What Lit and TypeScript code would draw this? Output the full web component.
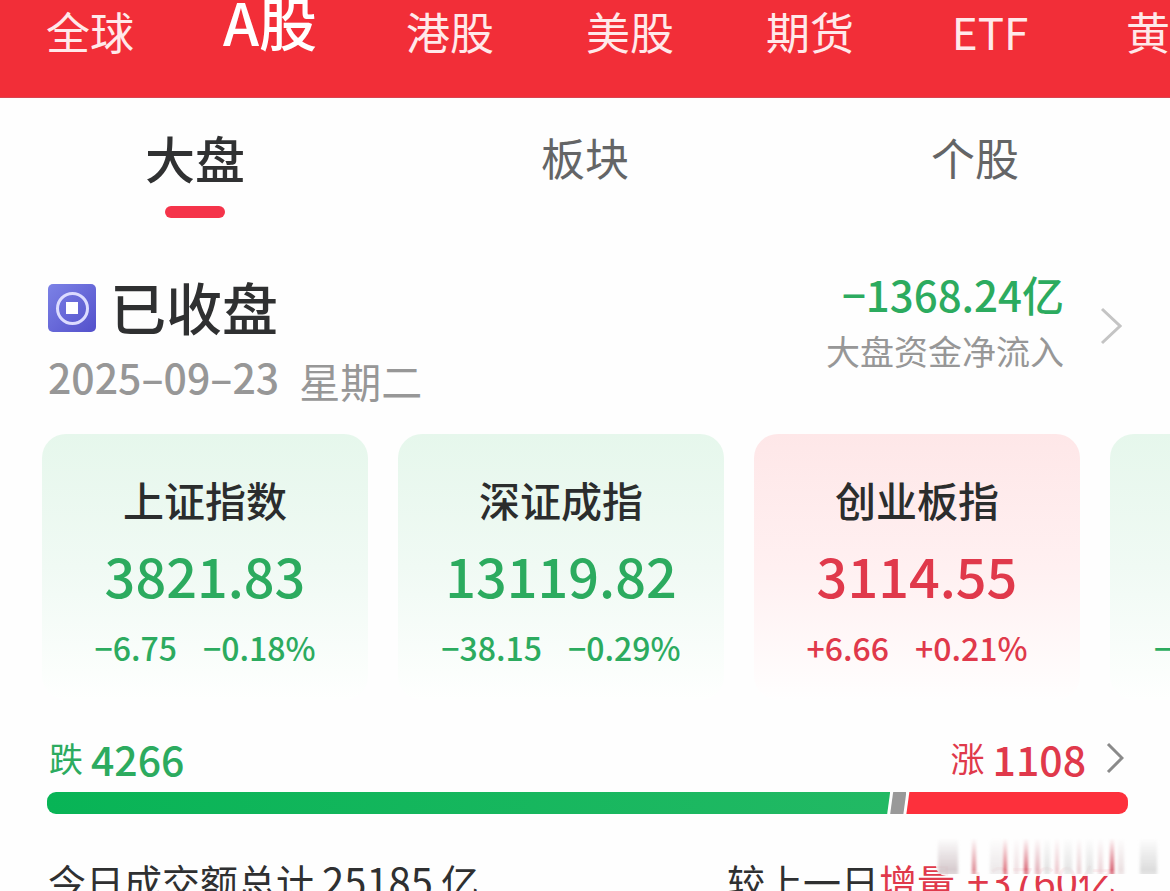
import { LitElement, html, svg, css } from "lit";
import { customElement, property } from "lit/decorators.js";
import { classMap } from "lit/directives/class-map.js";

interface Quote {
  name: string;
  price: string;
  change: string;
  percent: string;
  trend: "up" | "down";
}

const MARKETS = ["全球", "A股", "港股", "美股", "期货", "ETF", "黄金"];
const TABS = ["大盘", "板块", "个股"];
const QUOTES: Quote[] = [
  { name: "上证指数", price: "3821.83", change: "−6.75", percent: "−0.18%", trend: "down" },
  { name: "深证成指", price: "13119.82", change: "−38.15", percent: "−0.29%", trend: "down" },
  { name: "创业板指", price: "3114.55", change: "+6.66", percent: "+0.21%", trend: "up" },
  { name: "", price: "", change: "−", percent: "", trend: "down" },
];

// Vertical smear over the turnover row: x, width, colour, opacity.
const STREAKS: [number, number, string, number][] = [
  [4, 20, "#cdbfc3", 0.8],
  [38, 4, "#d87984", 0.9],
  [56, 12, "#e6dfe1", 0.7],
  [69, 4, "#d9606f", 0.9],
  [80, 5, "#ecd9dc", 0.8],
  [90, 4, "#d24f60", 0.9],
  [101, 5, "#dda4ac", 0.8],
  [110, 6, "#dcdcdc", 0.8],
  [121, 4, "#e9b8be", 0.8],
  [130, 8, "#dedede", 0.8],
  [143, 4, "#e5c3c8", 0.8],
  [152, 7, "#dddddd", 0.8],
  [164, 5, "#e8ccd0", 0.8],
  [176, 4, "#cf4558", 0.9],
  [184, 6, "#e6d8da", 0.8],
  [206, 17, "#d4d4d4", 0.8],
];

@customElement("index-card")
export class IndexCard extends LitElement {
  @property({ attribute: false }) quote!: Quote;

  static styles = css`
    :host {
      display: block;
      flex: 0 0 326px;
    }
    .card {
      box-sizing: border-box;
      display: flex;
      flex-direction: column;
      align-items: center;
      width: 100%;
      height: 266px;
      padding: 34px 0 0;
      border: 0;
      border-radius: 24px;
      font: inherit;
      color: #2cab5f;
      background: linear-gradient(#e6f7ec, #f0faf4 50%, #fefffe);
    }
    .up {
      color: #e0394b;
      background: linear-gradient(#fee7e8, #fff0f1 50%, #fffefe);
    }
    .name {
      height: 62px;
      line-height: 62px;
      font-size: 41px;
      font-weight: 500;
      color: #2b2d2d;
    }
    .price {
      height: 92px;
      line-height: 90px;
      font-size: 54px;
      font-weight: 500;
    }
    .moves {
      display: flex;
      gap: 26px;
      justify-content: center;
      line-height: 50px;
      font-size: 32px;
      white-space: nowrap;
      font-weight: 500;
    }
    .partial .moves {
      box-sizing: border-box;
      width: 100%;
      padding-left: 44px;
      justify-content: flex-start;
    }
  `;

  render() {
    const q = this.quote;
    const classes = { card: true, up: q.trend === "up", partial: !q.percent };
    return html`<button class=${classMap(classes)} type="button">
      <span class="name">${q.name}</span>
      <span class="price">${q.price}</span>
      <span class="moves"><span>${q.change}</span><span>${q.percent}</span></span>
    </button>`;
  }
}

@customElement("app-root")
export class AppRoot extends LitElement {
  static styles = css`
    :host {
      display: block;
      height: 100vh;
      overflow: hidden;
      background: #fefefe;
      color: #2f3031;
      font-family: "Noto Sans CJK SC", "Noto Sans", sans-serif;
    }
    a {
      color: inherit;
      text-decoration: none;
    }
    button {
      margin: 0;
      padding: 0;
      border: 0;
      background: none;
      color: inherit;
      font: inherit;
    }
    .markets {
      display: flex;
      box-sizing: border-box;
      height: 98px;
      overflow: hidden;
      background: #f22e38;
      border-bottom: 1px solid #d94450;
    }
    .market {
      flex: 0 0 180px;
      line-height: 62px;
      text-align: center;
      font-size: 44px;
      color: #ffe9ea;
    }
    .market.on {
      line-height: 42px;
      font-size: 58px;
      font-weight: 500;
      color: #fff;
    }
    .tabs {
      display: grid;
      grid-template-columns: repeat(3, 1fr);
      height: 120px;
    }
    .tab {
      display: flex;
      flex-direction: column;
      align-items: center;
      padding-top: 22px;
      line-height: 74px;
      font-size: 44px;
      color: #646566;
    }
    .tab.on {
      font-size: 50px;
      font-weight: 500;
      color: #303132;
    }
    .tab.on::after {
      content: "";
      width: 60px;
      height: 12px;
      margin-top: 12px;
      border-radius: 6px;
      background: #f5344a;
    }
    .summary {
      display: flex;
      justify-content: space-between;
      padding: 54px 48px 0;
      height: 162px;
    }
    .state {
      display: flex;
      align-items: center;
      gap: 14px;
      height: 72px;
    }
    .state h1 {
      margin: 0;
      padding-bottom: 4px;
      font-size: 56px;
      line-height: 68px;
      font-weight: 500;
    }
    .date {
      display: flex;
      gap: 20px;
      line-height: 64px;
      font-size: 41px;
      font-weight: 500;
      color: #979797;
    }
    .weekday {
      line-height: 72px;
      font-weight: 400;
    }
    .flow {
      display: flex;
      align-items: center;
      gap: 36px;
      height: 108px;
      text-align: right;
    }
    .amount {
      display: block;
      line-height: 50px;
      font-size: 42px;
      font-weight: 500;
      color: #2cab5f;
    }
    .caption {
      display: block;
      line-height: 64px;
      font-size: 34px;
      color: #979797;
    }
    .cards {
      display: flex;
      gap: 30px;
      padding-left: 42px;
      overflow: hidden;
    }
    .breadth {
      padding: 24px 42px 0 47px;
    }
    .counts {
      display: flex;
      align-items: center;
      justify-content: space-between;
      height: 68px;
      padding: 0 4px 0 2px;
    }
    .count {
      display: flex;
      align-items: center;
      gap: 8px;
      font-size: 41px;
      line-height: 68px;
      font-weight: 500;
    }
    .word {
      font-size: 34px;
      font-weight: 400;
    }
    .fall {
      color: #2cab5f;
    }
    .rise {
      color: #e0394b;
    }
    .rise svg {
      margin-left: 12px;
    }
    .bar {
      display: flex;
      height: 22px;
      overflow: hidden;
      border-radius: 9px;
    }
    .part-fall {
      background: linear-gradient(90deg, #08b456, #22b964);
      clip-path: polygon(0 0, 100% 0, calc(100% - 3px) 100%, 0 100%);
    }
    .part-flat {
      background: #999;
      clip-path: polygon(3px 0, 100% 0, calc(100% - 3px) 100%, 0 100%);
    }
    .part-rise {
      background: #fd303c;
      clip-path: polygon(3px 0, 100% 0, 100% 100%, 0 100%);
    }
    .turnover {
      position: relative;
      display: flex;
      justify-content: space-between;
      padding: 36px 54px 0 48px;
      line-height: 60px;
      font-size: 38px;
      white-space: nowrap;
    }
    .total {
      padding: 0 8px;
      font-size: 40px;
    }
    .diff {
      padding-left: 12px;
      font-size: 40px;
    }
    .smear {
      position: absolute;
      top: 24px;
      right: 8px;
    }
  `;

  private chevron(w: number, h: number, color: string) {
    return html`<svg width=${w} height=${h} viewBox="0 0 ${w} ${h}" fill="none" aria-hidden="true">
      ${svg`<path d="M2 2 L${w - 2} ${h / 2} L2 ${h - 2}" stroke=${color} stroke-width="3" />`}
    </svg>`;
  }

  private smear() {
    return html`<svg class="smear" width="228" height="42" viewBox="0 0 228 42" aria-hidden="true">
      <defs>
        <linearGradient id="fade" x1="0" y1="0" x2="0" y2="1">
          <stop offset="0" stop-color="#fff" stop-opacity="0" />
          <stop offset="0.75" stop-color="#fff" stop-opacity="1" />
          <stop offset="1" stop-color="#fff" stop-opacity="0.5" />
        </linearGradient>
        <mask id="m"><rect width="228" height="42" fill="url(#fade)" /></mask>
        <filter id="soft"><feGaussianBlur stdDeviation="1.4 0.5" /></filter>
      </defs>
      <rect x="2" y="14" width="224" height="24" rx="10" fill="#fefefe" opacity="0.92" />
      <g mask="url(#m)">
        <g filter="url(#soft)">
          ${STREAKS.map(
            ([x, w, color, o]) =>
              svg`<rect x=${x} y="0" width=${w} height="36" fill=${color} opacity=${o} />`
          )}
        </g>
      </g>
    </svg>`;
  }

  render() {
    return html`
      <nav class="markets">
        ${MARKETS.map((m, i) => html`<a href="#" class="market ${i === 1 ? "on" : ""}">${m}</a>`)}
      </nav>
      <div class="tabs">
        ${TABS.map((t, i) => html`<button type="button" class="tab ${i === 0 ? "on" : ""}">${t}</button>`)}
      </div>
      <section class="summary">
        <div>
          <div class="state">
            <svg width="48" height="48" viewBox="0 0 48 48" aria-hidden="true">
              <defs>
                <linearGradient id="g" x1="0" y1="0" x2="1" y2="1">
                  <stop offset="0" stop-color="#7c82e6" />
                  <stop offset="1" stop-color="#5350cb" />
                </linearGradient>
              </defs>
              <rect width="48" height="48" rx="5" fill="url(#g)" />
              <circle cx="24.5" cy="24.5" r="15" fill="none" stroke="#dcdcff" stroke-width="3" />
              <rect x="18" y="18" width="12" height="12" fill="#fff" />
            </svg>
            <h1>已收盘</h1>
          </div>
          <div class="date"><span>2025–09–23</span><span class="weekday">星期二</span></div>
        </div>
        <button type="button" class="flow">
          <span>
            <span class="amount">−1368.24亿</span>
            <span class="caption">大盘资金净流入</span>
          </span>
          ${this.chevron(22, 38, "#c4c4c4")}
        </button>
      </section>
      <section class="cards">
        ${QUOTES.map((q) => html`<index-card .quote=${q}></index-card>`)}
      </section>
      <section class="breadth">
        <div class="counts">
          <span class="count fall"><span class="word">跌</span>4266</span>
          <button type="button" class="count rise">
            <span class="word">涨</span>1108${this.chevron(18, 32, "#8a8a8a")}
          </button>
        </div>
        <div class="bar">
          <div class="part-fall" style="width:78%"></div>
          <div class="part-flat" style="width:1.5%"></div>
          <div class="part-rise" style="width:20.5%"></div>
        </div>
      </section>
      <section class="turnover">
        <span>今日成交额总计<span class="total">25185</span>亿</span>
        <span>较上一日<span class="rise">增量<span class="diff">+3760</span>亿</span></span>
        ${this.smear()}
      </section>
    `;
  }
}
